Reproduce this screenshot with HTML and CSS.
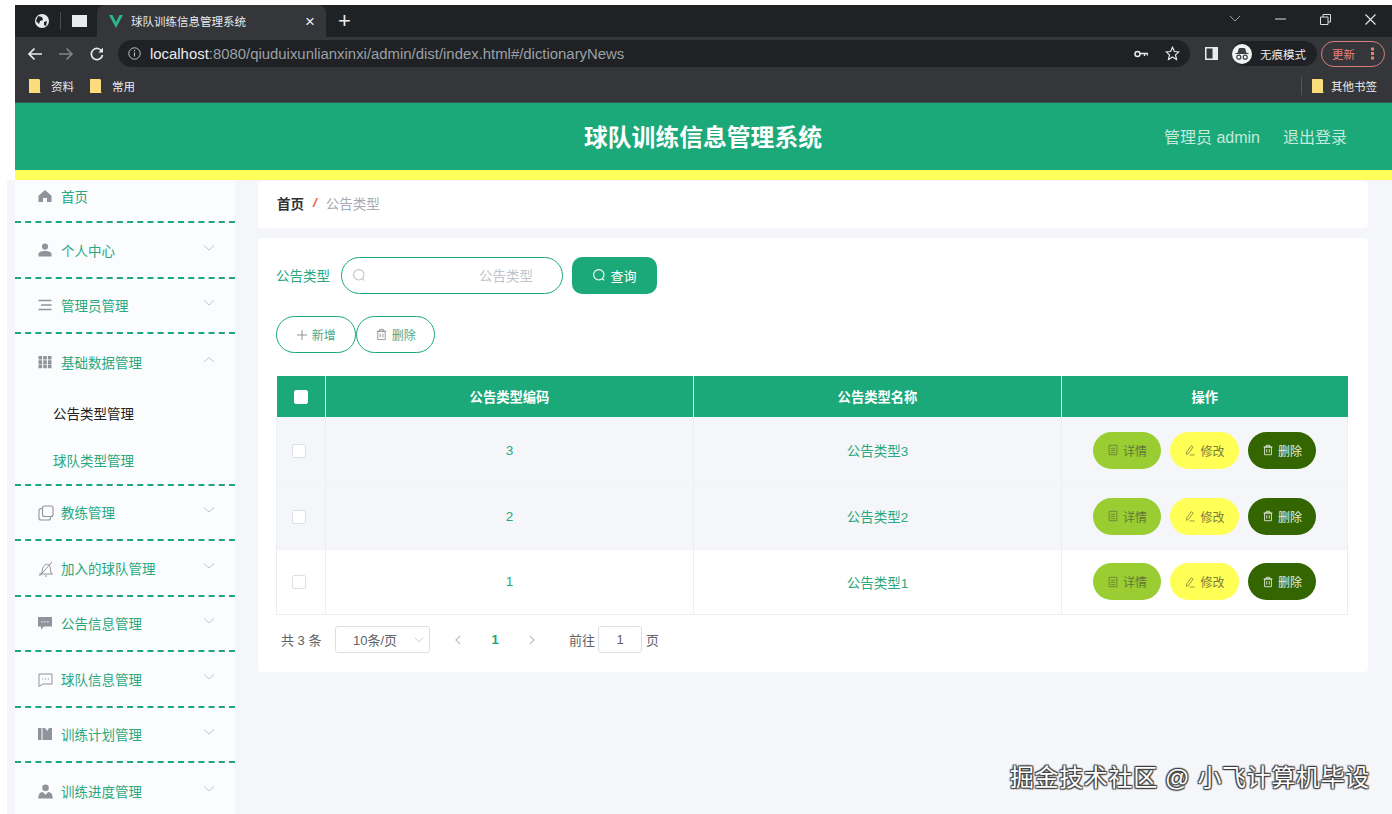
FILE: index.html
```html
<!DOCTYPE html>
<html lang="zh-CN">
  <head>
    <meta charset="UTF-8" />
    <title>球队训练信息管理系统</title>
    <link rel="stylesheet" href="styles.css">
  </head>
  <body>
    <svg class="defs" width="0" height="0">
      <symbol id="arrow" viewBox="0 0 12 12"><path d="M1 3.5l5 4.5 5-4.5" fill="none" stroke="#c0c4cc" stroke-width="1"/></symbol>
      <symbol id="arrow-up" viewBox="0 0 12 12"><path d="M1 8l5-4.5L11 8" fill="none" stroke="#c0c4cc" stroke-width="1"/></symbol>
      <symbol id="folder" viewBox="0 0 12 14"><path d="M0 0h10l1 1v12l1 1H0z" fill="#fbdc7c"/></symbol>
      <symbol id="search" viewBox="0 0 14 14"><circle cx="6.8" cy="6.8" r="5.2" fill="none" stroke="currentColor" stroke-width="1.1"/><path d="M10.5 10.8l1.6 1.6" stroke="currentColor" stroke-width="1.1"/></symbol>
      <symbol id="trash" viewBox="0 0 14 14"><path d="M3 3.5h8v9H3zM1.8 3.5h10.4M5 3.5V1.5h4v2M5.5 6v4M8.5 6v4" fill="none" stroke="currentColor" stroke-width="1"/></symbol>
      <symbol id="doc" viewBox="0 0 14 14"><path d="M2.5 1.5h9v11h-9zM4.5 5h5M4.5 7.5h5M4.5 10h5" fill="none" stroke="currentColor" stroke-width=".9"/></symbol>
      <symbol id="pen" viewBox="0 0 14 14"><path d="M3 9.5L8.5 2l2.2 1.6-5.4 7.4-2.4 1zM6.5 12.8h6" fill="none" stroke="currentColor" stroke-width=".9"/></symbol>
      <symbol id="user" viewBox="0 0 14 14"><circle cx="7" cy="3.6" r="3.1" fill="#909399"/><path d="M0.5 13.5v-2.2c0-2 2-3.3 6.500-3.300s6.500 1.300 6.500 3.300v2.200z" fill="#909399"/></symbol>
    </svg>

    <div class="window">
      <div class="tabstrip">
        <svg class="tb-globe" width="16" height="16" viewBox="0 0 16 16"><circle cx="8" cy="8" r="7" fill="#e8eaed"/><path d="M4 3l4 1 1 3-3 1-1 3-3-3zM10 9l3-1-1 5-2-1z" fill="#202124"/></svg>
        <span class="tb-sep"></span>
        <span class="tb-square"></span>
        <div class="tab">
          <svg width="14" height="13" viewBox="0 0 14 13"><path d="M0 0h3.500L7 7l3.500-7H14L7 13z" fill="#2bb58a"/></svg>
          <span class="tab-title">球队训练信息管理系统</span>
          <span class="tab-close">×</span>
        </div>
        <span class="tab-new">+</span>
        <div class="win-ctrl">
          <svg width="12" height="8" viewBox="0 0 12 8"><path d="M1 1l5 5 5-5" fill="none" stroke="#9aa0a6"/></svg>
          <svg width="11" height="2" viewBox="0 0 11 2"><path d="M0 1h11" stroke="#dadce0"/></svg>
          <svg width="11" height="11" viewBox="0 0 11 11"><path d="M.5 3h7.500v7.500H.5zM3 3V.5h7.500V8H8" fill="none" stroke="#dadce0"/></svg>
          <svg width="11" height="11" viewBox="0 0 11 11"><path d="M.5.5l10 10M10.500.5l-10 10" stroke="#e8eaed" stroke-width="1.100"/></svg>
        </div>
      </div>

      <div class="toolbar">
        <svg class="nav-back" width="16" height="14" viewBox="0 0 16 14"><path d="M15 7H2M7.500 1.500L2 7l5.500 5.500" fill="none" stroke="#e8eaed" stroke-width="1.700"/></svg>
        <svg class="nav-fwd" width="16" height="14" viewBox="0 0 16 14"><path d="M1 7h13M8.500 1.500L14 7l-5.500 5.500" fill="none" stroke="#80868b" stroke-width="1.500"/></svg>
        <svg class="nav-reload" width="14" height="14" viewBox="0 0 14 14"><path d="M12 4.500A5.600 5.600 0 1 0 12.500 8" fill="none" stroke="#e8eaed" stroke-width="1.700"/><path d="M13 .8v4.700H8.300z" fill="#e8eaed"/></svg>
        <div class="omnibox">
          <svg width="13" height="13" viewBox="0 0 13 13"><circle cx="6.500" cy="6.500" r="5.700" fill="none" stroke="#bdc1c6"/><path d="M6.500 5.500v4M6.500 3v1.300" stroke="#bdc1c6" stroke-width="1.100"/></svg>
          <span class="url"><b>localhost</b>:8080/qiuduixunlianxinxi/admin/dist/index.html#/dictionaryNews</span>
          <svg class="omni-key" width="14" height="8" viewBox="0 0 14 8"><circle cx="3.500" cy="4" r="2.500" fill="none" stroke="#e8eaed" stroke-width="1.500"/><path d="M6 3.500h7.500v2M10.500 4v2" fill="none" stroke="#e8eaed" stroke-width="1.400"/></svg>
          <svg class="omni-star" width="15" height="15" viewBox="0 0 15 15"><path d="M7.500 1.300l1.900 4.200 4.400.4-3.300 3 1 4.500-4-2.400-4 2.400 1-4.500-3.300-3 4.400-.4z" fill="none" stroke="#e8eaed" stroke-width="1.200"/></svg>
        </div>
        <svg class="tb-panel" width="13" height="13" viewBox="0 0 13 13"><path d="M0 0h13v13H0z" fill="#e8eaed"/><path d="M1.500 1.500h6v10h-6z" fill="#35363a"/></svg>
        <div class="incognito">
          <svg width="20" height="20" viewBox="0 0 20 20"><circle cx="10" cy="10" r="10" fill="#f1f3f4"/><path d="M6 9l1.300-4.500h5.400L14 9zM3.500 9.500h13" fill="#3c4043" stroke="#3c4043"/><circle cx="6.800" cy="13.200" r="2" fill="none" stroke="#3c4043" stroke-width="1.200"/><circle cx="13.200" cy="13.200" r="2" fill="none" stroke="#3c4043" stroke-width="1.200"/></svg>
          <span>无痕模式</span>
        </div>
        <div class="update"><span>更新</span><i class="dots"></i></div>
      </div>

      <div class="bookmarks">
        <svg width="12" height="14"><use href="#folder"/></svg><span>资料</span>
        <svg class="bm-gap" width="12" height="14"><use href="#folder"/></svg><span>常用</span>
        <span class="bm-sep"></span>
        <svg width="12" height="14"><use href="#folder"/></svg><span>其他书签</span>
      </div>

      <header class="app-header">
        <span></span>
        <h1>球队训练信息管理系统</h1>
        <div class="app-user"><span>管理员 admin</span><span>退出登录</span></div>
      </header>

      <div class="app-body">
        <aside class="sidebar">
          <div class="menu-item first">
            <svg class="mi" width="14" height="14" viewBox="0 0 14 14"><path d="M7 1L0.500 6.800V13H5V9h4v4h4.500V6.800z" fill="#909399"/></svg>
            <span>首页</span>
          </div>
          <div class="menu-item">
            <svg class="mi" width="14" height="14"><use href="#user"/></svg>
            <span>个人中心</span><svg class="caret" width="12" height="12"><use href="#arrow"/></svg>
          </div>
          <div class="menu-item">
            <svg class="mi" width="14" height="14" viewBox="0 0 14 14"><path d="M0.500 2.500h13M3 7h10.500M0.500 11.500h13" stroke="#909399" stroke-width="1.600"/></svg>
            <span>管理员管理</span><svg class="caret" width="12" height="12"><use href="#arrow"/></svg>
          </div>
          <div class="menu-group">
            <div class="menu-item open">
              <svg class="mi" width="14" height="14" viewBox="0 0 14 14"><path d="M.5 1h3.600v3.600H.5zM5.200 1h3.600v3.600H5.200zM9.900 1h3.600v3.600H9.900zM.5 5.300h3.600v3.600H.5zM5.200 5.300h3.600v3.600H5.200zM9.900 5.300h3.600v3.600H9.900zM.5 9.600h3.600v3.600H.5zM5.200 9.600h3.600v3.600H5.200zM9.900 9.600h3.600v3.600H9.900z" fill="#909399"/></svg>
              <span>基础数据管理</span><svg class="caret" width="12" height="12"><use href="#arrow-up"/></svg>
            </div>
            <div class="sub-item active">公告类型管理</div>
            <div class="sub-item">球队类型管理</div>
          </div>
          <div class="menu-item">
            <svg class="mi" width="16" height="16" viewBox="0 0 16 16"><rect x="4.500" y="1" width="10.500" height="10.500" rx="2" fill="none" stroke="#909399" stroke-width="1.100"/><path d="M4.500 3.500H3a2 2 0 0 0-2 2V13a2 2 0 0 0 2 2h7.500a2 2 0 0 0 2-2v-1" fill="none" stroke="#909399" stroke-width="1.100"/></svg>
            <span>教练管理</span><svg class="caret" width="12" height="12"><use href="#arrow"/></svg>
          </div>
          <div class="menu-item">
            <svg class="mi" width="16" height="16" viewBox="0 0 16 16"><path d="M1 13h14M3 13c1.500-2 1-5 2.500-7.500S10 2.500 11.500 4.500s.5 6 2 8.500M1.500 15L14 1M7 15h2" fill="none" stroke="#909399"/></svg>
            <span>加入的球队管理</span><svg class="caret" width="12" height="12"><use href="#arrow"/></svg>
          </div>
          <div class="menu-item">
            <svg class="mi" width="14" height="14" viewBox="0 0 14 14"><path d="M0 1h14v9.500H6L3 13.500v-3H0z" fill="#909399"/><path d="M3.500 5.800h1.200M6.400 5.800h1.200M9.300 5.800h1.200" stroke="#fff" stroke-width="1.300"/></svg>
            <span>公告信息管理</span><svg class="caret" width="12" height="12"><use href="#arrow"/></svg>
          </div>
          <div class="menu-item">
            <svg class="mi" width="15" height="15" viewBox="0 0 15 15"><path d="M1 2h13v10H5l-4 2.500z" fill="none" stroke="#909399"/><path d="M4.200 7h1.200M7 7h1.200M9.800 7H11" stroke="#909399"/></svg>
            <span>球队信息管理</span><svg class="caret" width="12" height="12"><use href="#arrow"/></svg>
          </div>
          <div class="menu-item">
            <svg class="mi" width="14" height="14" viewBox="0 0 14 14"><path d="M0 1h3.500v12H0zM4.500 1H7l2.200 3L11 1h3v12H4.500z" fill="#909399"/></svg>
            <span>训练计划管理</span><svg class="caret" width="12" height="12"><use href="#arrow"/></svg>
          </div>
          <div class="menu-item last">
            <svg class="mi" width="15" height="15" viewBox="0 0 14 14"><circle cx="7" cy="3.600" r="3.100" fill="#909399"/><path d="M0 13.500l1-4c.5-1.300 2-1.800 3.500-2L7 10l2.500-2.500c1.500.2 3 .7 3.500 2l1 4z" fill="#909399"/></svg>
            <span>训练进度管理</span><svg class="caret" width="12" height="12"><use href="#arrow"/></svg>
          </div>
        </aside>

        <main class="content">
          <div class="crumb">
            <b>首页</b><i>/</i><span>公告类型</span>
          </div>

          <div class="panel">
            <div class="search-row">
              <label>公告类型</label>
              <div class="search-input">
                <svg width="14" height="14"><use href="#search"/></svg>
                <span>公告类型</span>
              </div>
              <button class="btn-query"><svg width="14" height="14"><use href="#search"/></svg>查询</button>
            </div>

            <div class="action-row">
              <button class="btn-line"><svg width="12" height="12" viewBox="0 0 12 12"><path d="M6 1v10M1 6h10" stroke="currentColor"/></svg>新增</button>
              <button class="btn-line"><svg width="13" height="13"><use href="#trash"/></svg>删除</button>
            </div>

            <table class="grid">
              <thead>
                <tr>
                  <th class="col-check"><span class="check head"></span></th>
                  <th class="col-wide">公告类型编码</th>
                  <th class="col-wide">公告类型名称</th>
                  <th>操作</th>
                </tr>
              </thead>
              <tbody>
                <tr class="shade">
                  <td><span class="check"></span></td>
                  <td>3</td>
                  <td>公告类型3</td>
                  <td class="ops">
                    <button class="op op-view"><svg width="12" height="12"><use href="#doc"/></svg>详情</button>
                    <button class="op op-edit"><svg width="12" height="12"><use href="#pen"/></svg>修改</button>
                    <button class="op op-del"><svg width="12" height="12"><use href="#trash"/></svg>删除</button>
                  </td>
                </tr>
                <tr class="shade">
                  <td><span class="check"></span></td>
                  <td>2</td>
                  <td>公告类型2</td>
                  <td class="ops">
                    <button class="op op-view"><svg width="12" height="12"><use href="#doc"/></svg>详情</button>
                    <button class="op op-edit"><svg width="12" height="12"><use href="#pen"/></svg>修改</button>
                    <button class="op op-del"><svg width="12" height="12"><use href="#trash"/></svg>删除</button>
                  </td>
                </tr>
                <tr>
                  <td><span class="check"></span></td>
                  <td>1</td>
                  <td>公告类型1</td>
                  <td class="ops">
                    <button class="op op-view"><svg width="12" height="12"><use href="#doc"/></svg>详情</button>
                    <button class="op op-edit"><svg width="12" height="12"><use href="#pen"/></svg>修改</button>
                    <button class="op op-del"><svg width="12" height="12"><use href="#trash"/></svg>删除</button>
                  </td>
                </tr>
              </tbody>
            </table>

            <div class="pager">
              <span class="total">共 3 条</span>
              <div class="size">10条/页<svg width="10" height="10"><use href="#arrow"/></svg></div>
              <svg class="pg-prev" width="8" height="10" viewBox="0 0 8 10"><path d="M6 1L2 5l4 4" fill="none" stroke="#c0c4cc" stroke-width="1.300"/></svg>
              <b class="cur">1</b>
              <svg class="pg-next" width="8" height="10" viewBox="0 0 8 10"><path d="M2 1l4 4-4 4" fill="none" stroke="#c0c4cc" stroke-width="1.300"/></svg>
              <span class="goto">前往</span>
              <div class="jump">1</div>
              <span>页</span>
            </div>
          </div>
        </main>
      </div>
    </div>

    <div class="watermark">掘金技术社区 @ 小飞计算机毕设</div>
  </body>
</html>
```

FILE: styles.css
```css
* {
  box-sizing: border-box;
}
html,
body {
  margin: 0;
  padding: 0;
  height: 814px;
  overflow: hidden;
  background: #fff;
  font-family: "Liberation Sans", "Noto Sans CJK SC", sans-serif;
}
.defs {
  position: absolute;
}
svg {
  flex: none;
}
button {
  font-family: inherit;
  cursor: pointer;
}

.window {
  margin-left: 15px;
  padding-top: 5px;
}

/* browser chrome */
.tabstrip {
  display: flex;
  align-items: center;
  height: 32px;
  background: #202124;
  color: #e8eaed;
}
.tb-globe {
  margin-left: 19px;
}
.tb-sep {
  width: 1px;
  height: 18px;
  margin-left: 10px;
  background: #4a4b4f;
}
.tb-square {
  width: 15px;
  height: 12px;
  margin-left: 11px;
  background: #e8eaed;
}
.tab {
  display: flex;
  align-items: center;
  align-self: flex-end;
  width: 229px;
  height: 32px;
  margin-left: 10px;
  padding-left: 12px;
  background: #35363a;
  border-radius: 8px 8px 0 0;
}
.tab-title {
  margin-left: 8px;
  font-size: 11.500px;
  width: 174px;
  white-space: nowrap;
}
.tab-close {
  font-size: 17px;
  line-height: 1;
}
.tab-new {
  margin-left: 12px;
  font-size: 22px;
  line-height: 1;
  font-weight: 300;
}
.win-ctrl {
  display: flex;
  align-items: center;
  gap: 34px;
  margin-left: auto;
  padding: 0 16px 4px 0;
}

.toolbar {
  display: flex;
  align-items: center;
  height: 33px;
  background: #35363a;
}
.nav-back {
  margin-left: 12px;
}
.nav-fwd {
  margin-left: 15px;
}
.nav-reload {
  margin-left: 16px;
}
.omnibox {
  display: flex;
  align-items: center;
  width: 1072px;
  height: 27px;
  margin-left: 14px;
  padding: 0 10px 0 10px;
  background: #202124;
  border-radius: 14px;
}
.url {
  margin-left: 9px;
  font-size: 14.900px;
  color: #9aa0a6;
  white-space: nowrap;
}
.url b {
  font-weight: 400;
  color: #e8eaed;
}
.omni-key {
  margin-left: auto;
}
.omni-star {
  margin-left: 17px;
}
.tb-panel {
  margin-left: 15px;
}
.incognito {
  display: flex;
  align-items: center;
  width: 85px;
  height: 25px;
  margin-left: 14px;
  padding-left: 0;
  background: #202124;
  border-radius: 13px;
  font-size: 11.500px;
  color: #e8eaed;
}
.incognito span {
  margin-left: 8px;
  white-space: nowrap;
}
.update {
  display: flex;
  align-items: center;
  width: 64px;
  height: 26px;
  margin-left: 4px;
  padding-left: 10px;
  border: 1px solid #d47f78;
  border-radius: 13px;
  font-size: 11.500px;
  color: #ee7f74;
}
.dots {
  width: 2.500px;
  height: 2.500px;
  margin-left: 16px;
  background: #ee7f74;
  box-shadow: 0 -4.500px #ee7f74, 0 4.500px #ee7f74;
}

.bookmarks {
  display: flex;
  align-items: center;
  height: 33px;
  padding-left: 14px;
  background: #35363a;
  border-bottom: 1px solid #2b5c4c;
  font-size: 11.500px;
  color: #e8eaed;
}
.bookmarks span {
  margin-left: 10px;
}
.bm-gap {
  margin-left: 16px;
}
.bookmarks .bm-sep {
  width: 1px;
  height: 18px;
  margin-left: auto;
  margin-right: 10px;
  background: #55565a;
}
.bookmarks span:last-child {
  margin-left: 7px;
  margin-right: 15px;
}

/* app */
.app-header {
  display: grid;
  grid-template-columns: 1fr auto 1fr;
  align-items: center;
  height: 77px;
  padding: 0 45px 2px 0;
  background: #1ba97a;
  border-bottom: 10px solid #ffff5a;
  color: #fff;
}
.app-header h1 {
  margin: 0;
  font-size: 23.800px;
  font-weight: 700;
  transform: translateX(22px);
}
.app-user {
  display: flex;
  justify-content: flex-end;
  gap: 23px;
  font-size: 16px;
  color: #c4eadc;
}

.app-body {
  display: flex;
  height: 640px;
  background: #f4f6f9;
  box-shadow: -8px 0 #f4f6f9;
}
.sidebar {
  width: 220px;
  flex: none;
  padding-top: 0;
  background: #fbfcfd;
  font-size: 13.500px;
  color: #2aa880;
}
.menu-item {
  position: relative;
  display: flex;
  align-items: center;
  height: 55.500px;
  padding-left: 46px;
}
.mi {
  position: absolute;
  left: 23px;
  top: 50%;
  margin-top: -7px;
}
.menu-item,
.menu-group {
  border-bottom: 2px dashed #1ba97a;
}
.menu-group .menu-item {
  border-bottom: 0;
}
.menu-item.first {
  height: 43px;
  padding-bottom: 9px;
}
.menu-item.first .mi {
  margin-top: -12px;
}
.menu-item.last {
  border-bottom: 0;
}
.caret {
  position: absolute;
  right: 20px;
  top: 50%;
  margin-top: -8px;
}
.sub-item {
  display: flex;
  align-items: center;
  height: 47px;
  padding-left: 38px;
}
.sub-item.active {
  color: #222;
}

.content {
  flex: 1;
  padding: 1px 24px 0 23px;
}
.crumb {
  display: flex;
  align-items: center;
  height: 47px;
  padding: 0 0 4px 19px;
  background: #fff;
  border-radius: 4px;
  font-size: 13.500px;
  color: #a8abb2;
}
.crumb b {
  color: #303133;
}
.crumb i {
  margin: 0 9px;
  font-weight: 700;
  color: #f2603a;
}
.panel {
  height: 434px;
  margin-top: 10px;
  padding: 19px 20px 0 19px;
  background: #fff;
  border-radius: 4px;
}
.search-row {
  display: flex;
  align-items: center;
  height: 37px;
  font-size: 13.500px;
}
.search-row label {
  width: 64px;
  margin: 0 0 1px -1px;
  padding-right: 1px;
  color: #2aa880;
}
.search-input {
  display: flex;
  align-items: center;
  justify-content: space-between;
  width: 222px;
  height: 37px;
  margin-left: 1px;
  padding: 0 29px 2px 10px;
  border: 1px solid #1ba97a;
  border-radius: 19px;
  color: #c0c4cc;
}
.btn-query {
  display: flex;
  align-items: center;
  justify-content: center;
  gap: 4px;
  width: 85px;
  height: 37px;
  margin-left: 9px;
  padding: 0 0 1px;
  background: #1ba97a;
  border: 0;
  border-radius: 10px;
  font-size: 13px;
  color: #fff;
}
.action-row {
  display: flex;
  margin: 22px 0 0 -1px;
}
.btn-line {
  display: flex;
  align-items: center;
  justify-content: center;
  gap: 4px;
  width: 79.500px;
  height: 37px;
  padding: 0;
  background: #fff;
  border: 1px solid #1ba97a;
  border-radius: 19px;
  font-size: 12px;
  color: #4aa98a;
}
.btn-line svg {
  color: #909399;
}

.grid {
  width: 1072px;
  margin: 23px 0 0 -1px;
  border-collapse: collapse;
  table-layout: fixed;
  font-size: 13.500px;
  color: #2aa880;
}
.grid th {
  height: 41px;
  background: #1ba97a;
  border-left: 1px solid #d8efe6;
  font-size: 13.300px;
  color: #fff;
}
.grid th:first-child {
  border-left: 0;
}
.col-check {
  width: 49px;
}
.col-wide {
  width: 368px;
}
.grid td {
  height: 66px;
  padding: 0;
  text-align: center;
  border: 1px solid #ebeef5;
}
.grid tbody tr:nth-child(3) td {
  height: 65px;
}
.grid .shade td {
  background: #f4f6fa;
  border-top-color: #f4f6fa;
  border-bottom-color: #f0f2f7;
}
.check {
  display: inline-block;
  width: 14px;
  height: 14px;
  vertical-align: middle;
  background: #fff;
  border: 1px solid #dcdfe6;
  border-radius: 2px;
}
td .check {
  margin-right: 5px;
}
.check.head {
  border-color: #fff;
}
.ops {
  font-size: 0;
}
.op {
  display: inline-flex;
  align-items: center;
  justify-content: center;
  gap: 4px;
  width: 68.500px;
  height: 37px;
  margin: 0 4.500px;
  padding: 0;
  border: 0;
  border-radius: 19px;
  font-size: 12px;
  vertical-align: middle;
}
.op-view {
  background: #9acd32;
  color: #63763a;
}
.op-edit {
  background: #ffff55;
  color: #7d7d3a;
}
.op-del {
  background: #336600;
  color: #e6efe0;
}

.pager {
  display: flex;
  align-items: center;
  height: 28px;
  margin-top: 11px;
  padding-left: 4px;
  font-size: 13px;
  color: #606266;
}
.total {
  width: 54px;
}
.size {
  display: flex;
  align-items: center;
  justify-content: space-between;
  width: 95px;
  height: 27px;
  padding: 0 5px 0 17px;
  border: 1px solid #dcdfe6;
  border-radius: 3px;
}
.pg-prev {
  margin-left: 24px;
}
.cur {
  width: 66px;
  text-align: center;
  font-size: 13px;
  color: #1ba97a;
}
.goto {
  margin-left: 33px;
}
.jump {
  width: 44px;
  height: 27px;
  margin: 0 4px 0 3px;
  line-height: 25px;
  text-align: center;
  border: 1px solid #dcdfe6;
  border-radius: 3px;
}

/* sits over the page */
.watermark {
  position: absolute;
  right: 22px;
  top: 762px;
  font-size: 24px;
  line-height: 32px;
  letter-spacing: 0.650px;
  color: #fff;
  white-space: nowrap;
  text-shadow: 0 0 2px #333, 1px 1px 1px #444, -1px -1px 1px #444, 1px -1px 1px #444, -1px 1px 1px #444;
}
```
